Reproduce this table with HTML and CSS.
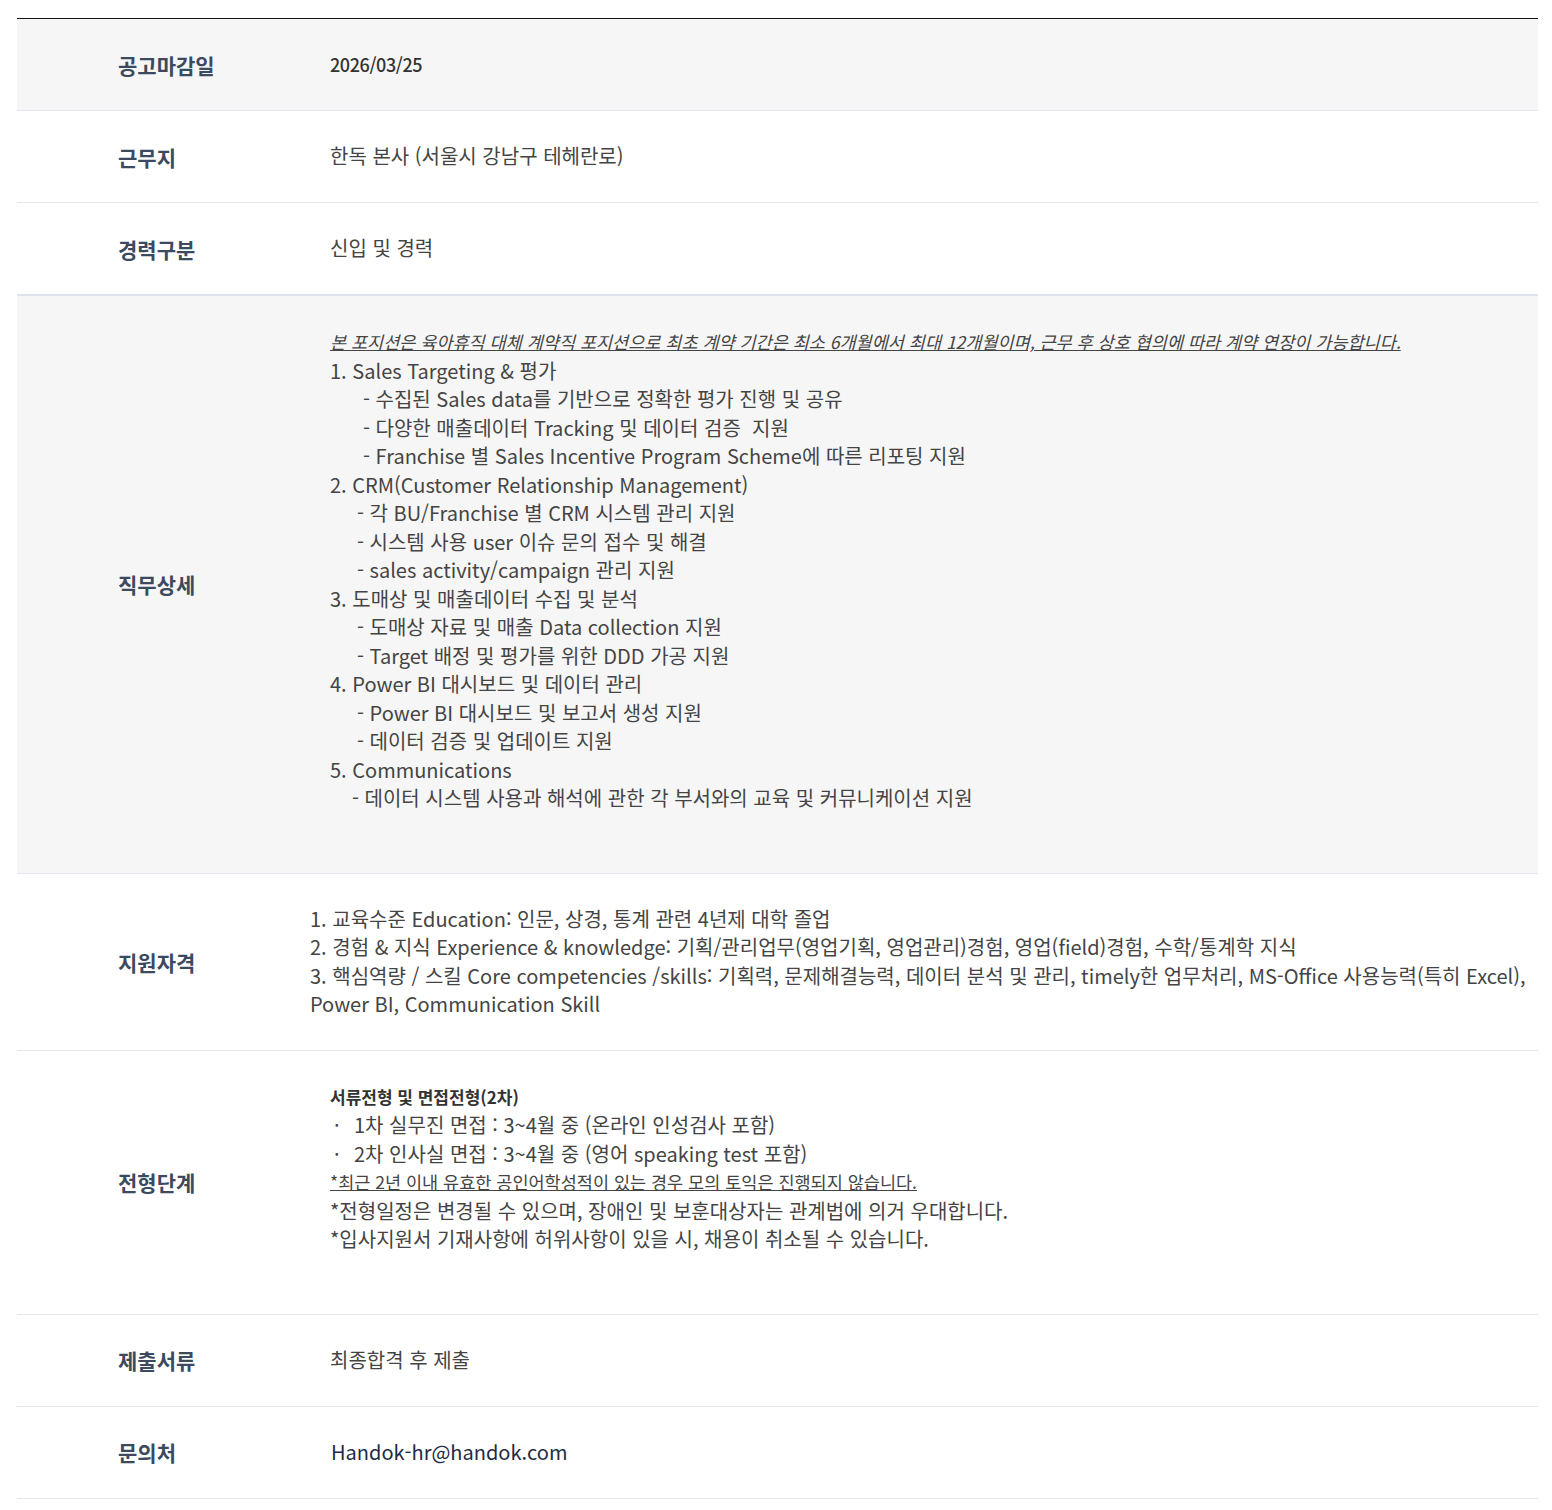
FILE: index.html
```html
<!DOCTYPE html>
<html lang="ko">
<head>
<meta charset="utf-8">
<title>채용공고</title>
<link rel="stylesheet" href="styles.css">
</head>
<body>
<div class="wrap">
  <div class="table">
    <div class="row gray">
      <div class="th">공고마감일</div>
      <div class="td date">2026/03/25</div>
    </div>
    <div class="row">
      <div class="th">근무지</div>
      <div class="td">한독 본사 (서울시 강남구 테헤란로)</div>
    </div>
    <div class="row thick">
      <div class="th">경력구분</div>
      <div class="td">신입 및 경력</div>
    </div>
    <div class="row gray tall detail">
      <div class="th">직무상세</div>
      <div class="td block">
        <p class="note-i">본 포지션은 육아휴직 대체 계약직 포지션으로 최초 계약 기간은 최소 6개월에서 최대 12개월이며, 근무 후 상호 협의에 따라 계약 연장이 가능합니다.</p>
        <p>1. Sales Targeting &amp; 평가</p>
        <p class="ind1">- 수집된 Sales data를 기반으로 정확한 평가 진행 및 공유</p>
        <p class="ind1">- 다양한 매출데이터 Tracking 및 데이터 검증&nbsp; 지원</p>
        <p class="ind1">- Franchise 별 Sales Incentive Program Scheme에 따른 리포팅 지원</p>
        <p>2. CRM(Customer Relationship Management)</p>
        <p class="ind2">- 각 BU/Franchise 별 CRM 시스템 관리 지원</p>
        <p class="ind2">- 시스템 사용 user 이슈 문의 접수 및 해결</p>
        <p class="ind2">- sales activity/campaign 관리 지원</p>
        <p>3. 도매상 및 매출데이터 수집 및 분석</p>
        <p class="ind2">- 도매상 자료 및 매출 Data collection 지원</p>
        <p class="ind2">- Target 배정 및 평가를 위한 DDD 가공 지원</p>
        <p>4. Power BI 대시보드 및 데이터 관리</p>
        <p class="ind2">- Power BI 대시보드 및 보고서 생성 지원</p>
        <p class="ind2">- 데이터 검증 및 업데이트 지원</p>
        <p>5. Communications</p>
        <p class="ind3">- 데이터 시스템 사용과 해석에 관한 각 부서와의 교육 및 커뮤니케이션 지원</p>
      </div>
    </div>
    <div class="row tall qual">
      <div class="th">지원자격</div>
      <div class="td block flush">
        <p>1. 교육수준 Education: 인문, 상경, 통계 관련 4년제 대학 졸업</p>
        <p>2. 경험 &amp; 지식 Experience &amp; knowledge: 기획/관리업무(영업기획, 영업관리)경험, 영업(field)경험, 수학/통계학 지식</p>
        <p>3. 핵심역량 / 스킬 Core competencies /skills: 기획력, 문제해결능력, 데이터 분석 및 관리, timely한 업무처리, MS-Office 사용능력(특히 Excel), Power BI, Communication Skill</p>
      </div>
    </div>
    <div class="row tall steps">
      <div class="th">전형단계</div>
      <div class="td block">
        <p class="sub-b">서류전형 및 면접전형(2차)</p>
        <p class="dot"><span class="bullet">·</span>1차 실무진 면접 : 3~4월 중 (온라인 인성검사 포함)</p>
        <p class="dot"><span class="bullet">·</span>2차 인사실 면접 : 3~4월 중 (영어 speaking test 포함)</p>
        <p class="note-u">*최근 2년 이내 유효한 공인어학성적이 있는 경우 모의 토익은 진행되지 않습니다.</p>
        <p>*전형일정은 변경될 수 있으며, 장애인 및 보훈대상자는 관계법에 의거 우대합니다.</p>
        <p>*입사지원서 기재사항에 허위사항이 있을 시, 채용이 취소될 수 있습니다.</p>
      </div>
    </div>
    <div class="row">
      <div class="th">제출서류</div>
      <div class="td">최종합격 후 제출</div>
    </div>
    <div class="row">
      <div class="th">문의처</div>
      <div class="td mail">Handok-hr@handok.com</div>
    </div>
  </div>
</div>
</body>
</html>
```

FILE: styles.css
```css
* { box-sizing: border-box; }
html, body { margin: 0; padding: 0; background: #fff; }
body {
  font-family: "Noto Sans CJK KR", "Noto Sans", sans-serif;
  color: #444;
}
.wrap {
  padding: 18px 14px 0 17px;
}
.table {
  border-top: 1px solid #111;
}
.row {
  display: flex;
  align-items: center;
  min-height: 92px;
  border-bottom: 1px solid #e4e6ee;
}
.row.thick { min-height: 93px; border-bottom: 2px solid #e0e3ec; }
.row.gray { background: #f6f6f6; }
.th {
  flex: 0 0 293px;
  padding-left: 101px;
  font-size: 21px;
  font-weight: 700;
  letter-spacing: 0;
  color: #3b4a5f;
  line-height: 28px;
}
.td {
  flex: 1;
  padding-left: 20px;
  font-size: 20px;
  line-height: 28.5px;
  color: #444;
}
.td p { margin: 0; }
.td.date { font-size: 18px; font-weight: 500; color: #333; letter-spacing: -0.4px; }
.td.mail { font-size: 20px; color: #1e2b45; padding-left: 21px; }
.detail .td { padding-top: 32px; padding-bottom: 60px; }
.qual .td { padding-top: 31px; padding-bottom: 31px; padding-left: 0; padding-right: 0; }
.steps .td { padding-top: 32px; padding-bottom: 60px; }
.note-i {
  font-style: italic;
  text-decoration: underline;
  font-size: 17.5px;
}
.note-u {
  text-decoration: underline;
  font-size: 17.5px;
}
.sub-b { font-size: 17px; font-weight: 700; color: #333; }
.ind1 { padding-left: 33px; }
.ind2 { padding-left: 27px; }
.ind3 { padding-left: 22px; }
.dot { padding-left: 4px; }
.bullet { display: inline-block; width: 20px; }
```
